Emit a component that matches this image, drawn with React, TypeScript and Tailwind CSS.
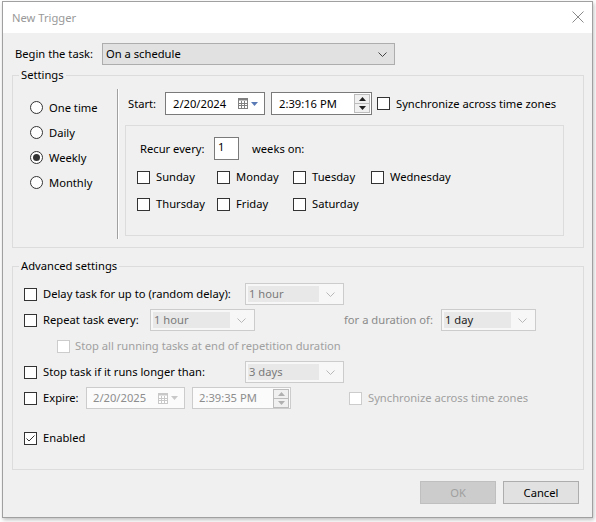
import React from 'react';

const FONT = "font-['Noto_Sans',sans-serif]";

function Checkbox({ checked = false, disabled = false }: { checked?: boolean; disabled?: boolean }) {
  return (
    <span
      className={`flex h-[13px] w-[13px] shrink-0 items-center justify-center border bg-white ${
        disabled ? 'border-[#cccccc]' : 'border-[#333333]'
      }`}
    >
      {checked && (
        <svg width="11" height="11" viewBox="0 0 11 11">
          <path d="M1.5 5.5 L4 8 L9.5 2.5" fill="none" stroke="#333" strokeWidth="1" />
        </svg>
      )}
    </span>
  );
}

function Radio({ checked = false }: { checked?: boolean }) {
  return (
    <span className="flex h-[13px] w-[13px] shrink-0 items-center justify-center rounded-full border border-[#333333] bg-white">
      {checked && <span className="h-[7px] w-[7px] rounded-full bg-[#333333]" />}
    </span>
  );
}

function Chevron({ color = '#444' }: { color?: string }) {
  return (
    <svg width="9" height="5" viewBox="0 0 9 5">
      <path d="M0.5 0.5 L4.5 4.5 L8.5 0.5" fill="none" stroke={color} strokeWidth="1" />
    </svg>
  );
}

function CalendarIcon({ disabled = false }: { disabled?: boolean }) {
  const c = disabled ? '#c8c8c8' : '#808080';
  return (
    <span className="flex items-center gap-[3px]">
      <svg width="10" height="11" viewBox="0 0 10 11">
        <rect x="0.5" y="0.5" width="9" height="10" fill="#fff" stroke={c} />
        <rect x="0.5" y="0.5" width="9" height="2" fill={c} />
        <path d="M3.5 3 V10 M6.5 3 V10 M1 5.5 H9 M1 7.5 H9" stroke={c} strokeWidth="1" />
      </svg>
      <svg width="7" height="4" viewBox="0 0 7 4">
        <path d="M0 0 H7 L3.5 4 Z" fill={disabled ? '#c8c8c8' : '#5a7ab5'} />
      </svg>
    </span>
  );
}

function Spinner({ disabled = false }: { disabled?: boolean }) {
  const c = disabled ? '#b0b0b0' : '#202020';
  return (
    <span className="flex h-[19px] w-[16px] flex-col border border-[#bcbcbc] bg-[#f0f0f0]">
      <span className="flex h-[9px] items-center justify-center border-b border-[#bcbcbc]">
        <svg width="7" height="4" viewBox="0 0 7 4">
          <path d="M0 4 H7 L3.5 0 Z" fill={c} />
        </svg>
      </span>
      <span className="flex flex-1 items-center justify-center">
        <svg width="7" height="4" viewBox="0 0 7 4">
          <path d="M0 0 H7 L3.5 4 Z" fill={c} />
        </svg>
      </span>
    </span>
  );
}

function DisabledCombo({ value, width, dark = false }: { value: string; width: string; dark?: boolean }) {
  return (
    <div className={`flex h-[22px] ${width} shrink-0 items-center border border-[#cccccc] bg-[#f7f7f7] p-[2px]`}>
      <div className={`flex h-full flex-1 items-center bg-[#e8e8e8] pl-[1px] ${dark ? 'text-[#222]' : 'text-[#7a7a7a]'}`}>
        {value}
      </div>
      <div className="flex w-[22px] items-center justify-center">
        <Chevron color="#b8b8b8" />
      </div>
    </div>
  );
}

const days = [
  ['Sunday', 'Monday', 'Tuesday', 'Wednesday'],
  ['Thursday', 'Friday', 'Saturday'],
];
const dayCols = ['w-[80px]', 'w-[76px]', 'w-[78px]', 'w-[90px]'];

export default function App() {
  return (
    <div className={`h-[522px] w-[596px] bg-white pl-[2px] pt-[1px] text-[11.2px] leading-[16px] text-black ${FONT}`}>
      <div className="flex h-[517px] w-[591px] flex-col border border-[#a0a0a0] bg-[#f0f0f0] shadow-[1px_2px_4px_rgba(0,0,0,0.25)]">
        {/* title bar */}
        <div className="flex h-[31px] shrink-0 items-center justify-between bg-white pl-[9px] pr-[8px]">
          <span className="text-[#999999]">New Trigger</span>
          <svg width="12" height="12" viewBox="0 0 12 12" className="-mt-[2px]">
            <path d="M0.5 0.5 L11.5 11.5 M11.5 0.5 L0.5 11.5" stroke="#8a8a8a" strokeWidth="1" />
          </svg>
        </div>

        <div className="flex flex-1 flex-col pl-[9px] pr-[8px] pt-[10px]">
          {/* begin the task */}
          <div className="flex items-center">
            <span className="w-[90px] pl-[3px]">Begin the task:</span>
            <div className="flex h-[22px] w-[293px] items-center justify-between border border-[#adadad] bg-[#e1e1e1] pl-[3px] pr-[7px]">
              <span>On a schedule</span>
              <Chevron />
            </div>
          </div>

          {/* Settings */}
          <fieldset className="mt-[2px] h-[181px] border border-[#dcdcdc]">
            <legend className="ml-[6px] px-[2px] leading-[16px]">Settings</legend>
            <div className="flex">
              <div className="flex w-[104px] flex-col pl-[17px] pt-[12px]">
                {['One time', 'Daily', 'Weekly', 'Monthly'].map((r) => (
                  <div key={r} className="flex h-[25px] items-center gap-[6px]">
                    <Radio checked={r === 'Weekly'} />
                    <span>{r}</span>
                  </div>
                ))}
              </div>
              <div className="mt-[6px] h-[150px] w-[2px] border-l border-r border-l-[#a0a0a0] border-r-white" />
              <div className="flex flex-col pl-[9px] pt-[9px]">
                <div className="flex h-[23px] items-center">
                  <span className="w-[37px]">Start:</span>
                  <div className="flex h-[23px] w-[100px] items-center justify-between border border-[#7a7a7a] bg-white pl-[7px] pr-[6px]">
                    <span>2/20/2024</span>
                    <CalendarIcon />
                  </div>
                  <div className="ml-[6px] flex h-[23px] w-[101px] items-center justify-between border border-[#7a7a7a] bg-white pl-[7px] pr-[1px]">
                    <span>2:39:16 PM</span>
                    <Spinner />
                  </div>
                  <span className="ml-[5px]">
                    <Checkbox />
                  </span>
                  <span className="ml-[6px] whitespace-nowrap">Synchronize across time zones</span>
                </div>

                <div className="-ml-[3px] mt-[10px] flex h-[111px] w-[439px] flex-col border border-[#dcdcdc] pl-[11px] pt-[11px]">
                  <div className="flex h-[23px] items-center">
                    <span className="w-[77px] pl-[3px]">Recur every:</span>
                    <div className="h-[23px] w-[25px] border border-[#7a7a7a] bg-white pl-[3px] pt-[1px]">1</div>
                    <span className="ml-[13px]">weeks on:</span>
                  </div>
                  <div className="mt-[7px] flex flex-col gap-[7px]">
                    {days.map((row, i) => (
                      <div key={i} className="flex h-[20px] items-center">
                        {row.map((d, j) => (
                          <div key={d} className={`flex items-center gap-[6px] ${dayCols[j]}`}>
                            <Checkbox />
                            <span>{d}</span>
                          </div>
                        ))}
                      </div>
                    ))}
                  </div>
                </div>
              </div>
            </div>
          </fieldset>

          {/* Advanced settings */}
          <fieldset className="mt-[10px] h-[212px] border border-[#dcdcdc]">
            <legend className="ml-[6px] px-[2px] leading-[16px]">Advanced settings</legend>
            <div className="flex flex-col pl-[11px] pt-[9px]">
              <div className="flex h-[22px] items-center">
                <div className="flex w-[221px] items-center gap-[6px]">
                  <Checkbox />
                  <span className="whitespace-nowrap">Delay task for up to (random delay):</span>
                </div>
                <DisabledCombo value="1 hour" width="w-[99px]" />
              </div>
              <div className="mt-[4px] flex h-[22px] items-center">
                <div className="flex w-[126px] items-center gap-[6px]">
                  <Checkbox />
                  <span className="whitespace-nowrap">Repeat task every:</span>
                </div>
                <DisabledCombo value="1 hour" width="w-[105px]" />
                <span className="ml-[89px] w-[97px] whitespace-nowrap text-[#8a8a8a]">for a duration of:</span>
                <DisabledCombo value="1 day" width="w-[95px]" dark />
              </div>
              <div className="mt-[4px] flex h-[22px] items-center gap-[5px] pl-[33px] text-[#a0a0a0]">
                <Checkbox disabled />
                <span className="whitespace-nowrap">Stop all running tasks at end of repetition duration</span>
              </div>
              <div className="mt-[4px] flex h-[22px] items-center">
                <div className="flex w-[221px] items-center gap-[6px]">
                  <Checkbox />
                  <span className="whitespace-nowrap">Stop task if it runs longer than:</span>
                </div>
                <DisabledCombo value="3 days" width="w-[99px]" />
              </div>
              <div className="mt-[4px] flex h-[22px] items-center">
                <div className="flex w-[62px] items-center gap-[6px]">
                  <Checkbox />
                  <span>Expire:</span>
                </div>
                <div className="flex h-[22px] w-[99px] items-center justify-between border border-[#cccccc] bg-[#fbfbfb] pl-[6px] pr-[6px] text-[#8d8d8d]">
                  <span>2/20/2025</span>
                  <CalendarIcon disabled />
                </div>
                <div className="ml-[7px] flex h-[22px] w-[99px] items-center justify-between border border-[#cccccc] bg-[#fbfbfb] pl-[6px] pr-[1px] text-[#8d8d8d]">
                  <span>2:39:35 PM</span>
                  <Spinner disabled />
                </div>
                <span className="ml-[58px]">
                  <Checkbox disabled />
                </span>
                <span className="ml-[6px] whitespace-nowrap text-[#a0a0a0]">Synchronize across time zones</span>
              </div>
              <div className="mt-[18px] flex h-[22px] items-center gap-[6px]">
                <Checkbox checked />
                <span>Enabled</span>
              </div>
            </div>
          </fieldset>

          {/* buttons */}
          <div className="mt-[11px] flex justify-end gap-[7px] pr-[5px]">
            <div className="flex h-[23px] w-[76px] items-center justify-center border border-[#bfbfbf] bg-[#cccccc] text-[#a0a0a0]">
              OK
            </div>
            <div className="flex h-[23px] w-[76px] items-center justify-center border border-[#adadad] bg-[#e1e1e1]">
              Cancel
            </div>
          </div>
        </div>
      </div>
    </div>
  );
}
